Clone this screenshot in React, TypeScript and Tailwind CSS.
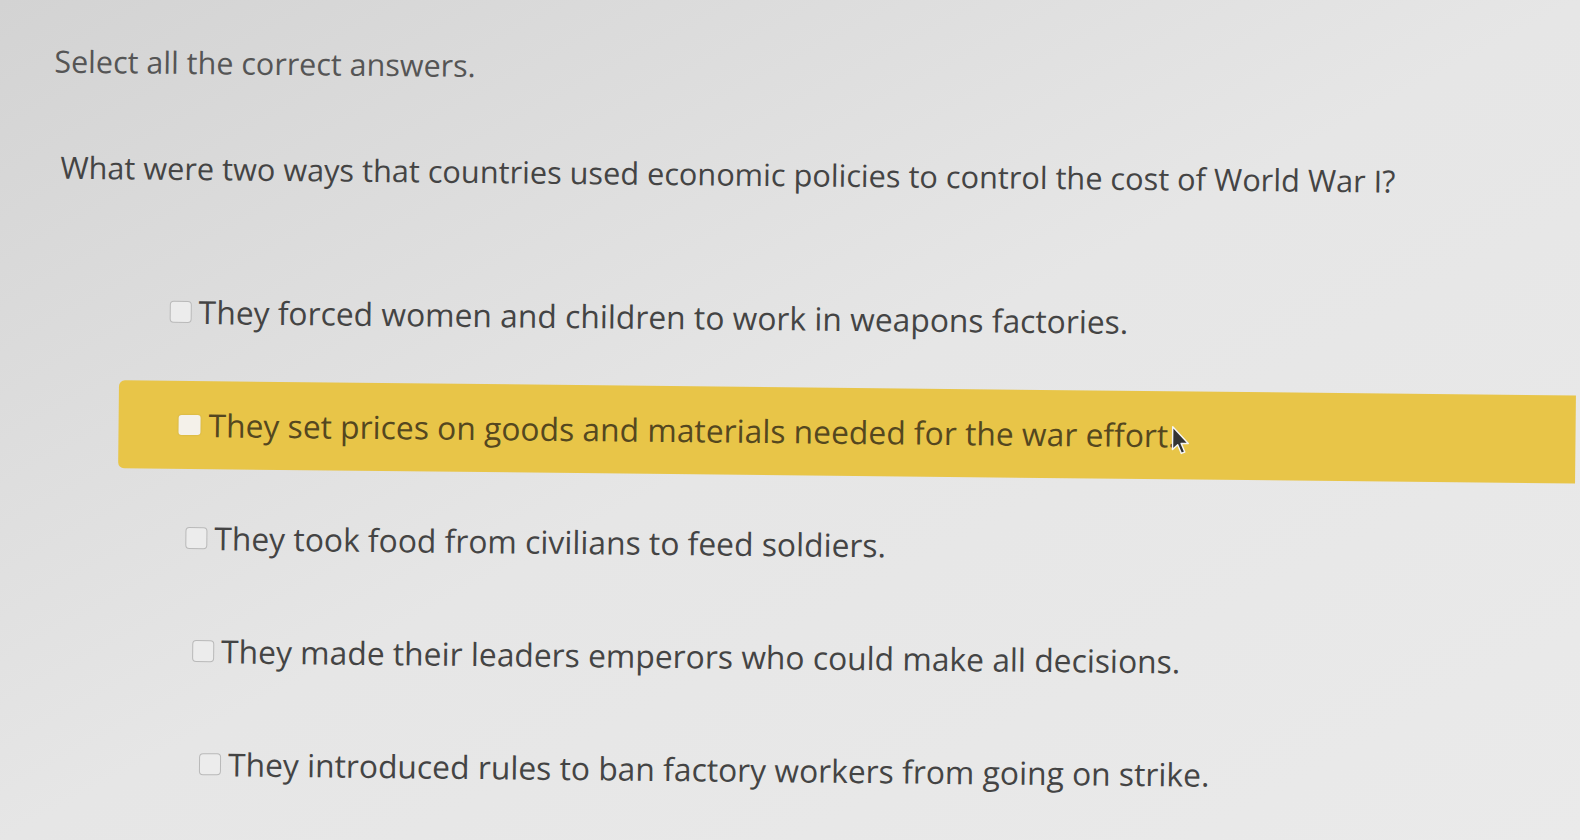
const options = [
  { text: 'They forced women and children to work in weapons factories.', indent: 'pl-[50px]', active: false },
  { text: 'They set prices on goods and materials needed for the war effort.', indent: 'pl-[60px]', active: true },
  { text: 'They took food from civilians to feed soldiers.', indent: 'pl-[68px]', active: false },
  { text: 'They made their leaders emperors who could make all decisions.', indent: 'pl-[76px]', active: false },
  { text: 'They introduced rules to ban factory workers from going on strike.', indent: 'pl-[84px]', active: false },
];

function Checkbox({ active }: { active: boolean }) {
  if (active) {
    return <span className="mr-[8px] inline-block h-[20px] w-[22px] shrink-0 rounded-[3px] bg-[#f4f1ea] shadow-[0_0_2px_rgba(0,0,0,0.15)]" />;
  }
  return <span className="mr-[7px] inline-block h-[22px] w-[22px] shrink-0 rounded-[4px] border border-[#b9b9b9] bg-[#ececec]" />;
}

function Cursor() {
  return (
    <svg className="absolute top-[10px] right-[-14px] h-[30px] w-[20px]" viewBox="0 0 13 21">
      <path d="M1 1 L1 17 L4.6 13.6 L7.2 19.6 L9.6 18.6 L7 12.6 L12 12.6 Z" fill="#333" stroke="#f5f5f5" strokeWidth="1" strokeLinejoin="round" />
    </svg>
  );
}

export default function App() {
  return (
    <div
      className="relative h-[840px] w-[1580px] overflow-hidden bg-linear-to-br from-[#d3d3d3] via-[#e6e6e6] to-[#eaeaea] text-[#555]"
      style={{ fontFamily: '"Open Sans", "Noto Sans", sans-serif' }}
    >
      <div className="origin-top-left rotate-[0.6deg]">
        <h1 className="pl-[55px] pt-[38px] text-[30.5px] leading-[44px] font-normal text-[#555]">
          Select all the correct answers.
        </h1>
        <p className="mt-[64px] pl-[62px] text-[30.7px] leading-[40px] text-[#444]">
          What were two ways that countries used economic policies to control the cost of World War I?
        </p>

        <div className="mt-[80px] flex flex-col gap-[25px]">
          {options.map((o) => (
            <div
              key={o.text}
              className={`ml-[123px] flex h-[88px] items-center ${o.indent} ${
                o.active ? 'rounded-l-[6px] bg-[#e8c548] text-[#54471f]' : 'text-[#444]'
              }`}
            >
              <Checkbox active={o.active} />
              <span className="relative text-[31.8px] leading-[40px] whitespace-nowrap">
                {o.text}
                {o.active && <Cursor />}
              </span>
            </div>
          ))}
        </div>
      </div>
    </div>
  );
}
